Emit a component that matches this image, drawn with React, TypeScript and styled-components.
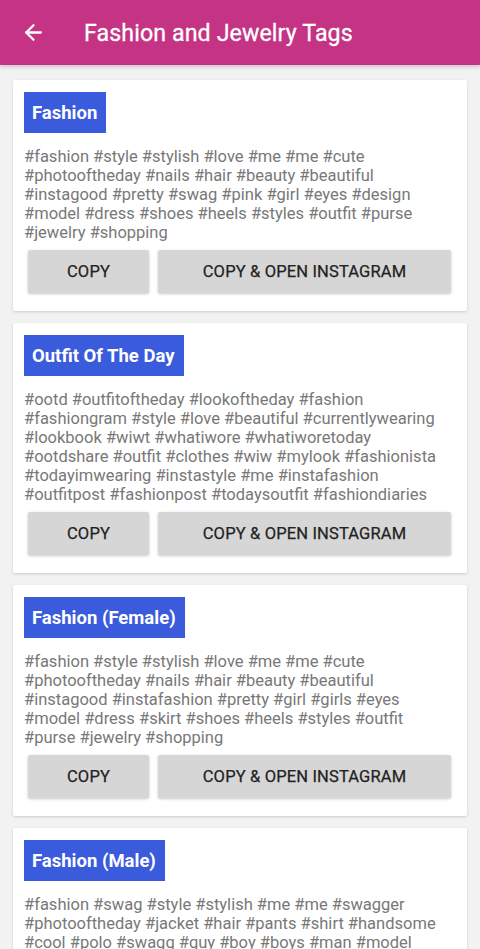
import styled, { createGlobalStyle } from 'styled-components';
import { ArrowLeft } from 'lucide-react';

const GlobalStyle = createGlobalStyle`
  html, body {
    margin: 0;
    padding: 0;
    background: #f2f2f2;
    font-family: Roboto, 'Noto Sans', Arial, sans-serif;
  }
  body {
    overflow: hidden;
  }
`;

interface TagGroup {
  title: string;
  lines: string[];
}

// lines kept as the app wraps them
const groups: TagGroup[] = [
  {
    title: 'Fashion',
    lines: [
      '#fashion #style #stylish #love #me #me #cute',
      '#photooftheday #nails #hair #beauty #beautiful',
      '#instagood #pretty #swag #pink #girl #eyes #design',
      '#model #dress #shoes #heels #styles #outfit #purse',
      '#jewelry #shopping',
    ],
  },
  {
    title: 'Outfit Of The Day',
    lines: [
      '#ootd #outfitoftheday #lookoftheday #fashion',
      '#fashiongram #style #love #beautiful #currentlywearing',
      '#lookbook #wiwt #whatiwore #whatiworetoday',
      '#ootdshare #outfit #clothes #wiw #mylook #fashionista',
      '#todayimwearing #instastyle #me #instafashion',
      '#outfitpost #fashionpost #todaysoutfit #fashiondiaries',
    ],
  },
  {
    title: 'Fashion (Female)',
    lines: [
      '#fashion #style #stylish #love #me #me #cute',
      '#photooftheday #nails #hair #beauty #beautiful',
      '#instagood #instafashion #pretty #girl #girls #eyes',
      '#model #dress #skirt #shoes #heels #styles #outfit',
      '#purse #jewelry #shopping',
    ],
  },
  {
    title: 'Fashion (Male)',
    lines: [
      '#fashion #swag #style #stylish #me #me #swagger',
      '#photooftheday #jacket #hair #pants #shirt #handsome',
      '#cool #polo #swagg #guy #boy #boys #man #model',
    ],
  },
];

function TagCard({ title, lines }: TagGroup) {
  return (
    <Card>
      <Chip>{title}</Chip>
      <Tags>
        {lines.map((l, i) => (
          <TagLine key={i}>{l}</TagLine>
        ))}
      </Tags>
      <ButtonRow>
        <ActionButton $grow={false}>COPY</ActionButton>
        <ActionButton $grow>COPY &amp; OPEN INSTAGRAM</ActionButton>
      </ButtonRow>
    </Card>
  );
}

export default function App() {
  return (
    <>
      <GlobalStyle />
      <Page>
        <AppBar>
          <BackButton aria-label="back">
            <ArrowLeft size={25} strokeWidth={2.2} color="#fff" />
          </BackButton>
          <Title>Fashion and Jewelry Tags</Title>
        </AppBar>
        <List>
          {groups.map((g) => (
            <TagCard key={g.title} {...g} />
          ))}
        </List>
      </Page>
    </>
  );
}

const Page = styled.div`
  width: 480px;
  height: 949px;
  overflow: hidden;
  background: #f2f2f2;
`;

const AppBar = styled.header`
  height: 65px;
  background: #c43384;
  display: flex;
  align-items: center;
  padding-left: 20px;
  box-shadow: 0 2px 4px rgba(0, 0, 0, 0.18);
`;

const BackButton = styled.div`
  width: 26px;
  height: 26px;
  display: flex;
  align-items: center;
  justify-content: center;
  margin-right: 38px;
`;

const Title = styled.h1`
  margin: 0;
  color: #fff;
  font-size: 23.2px;
  font-weight: 400;
  letter-spacing: 0.1px;
  -webkit-text-stroke: 0.3px #fff;
`;

const List = styled.main`
  display: flex;
  flex-direction: column;
  gap: 12px;
  padding: 15px 13px 0;
`;

const Card = styled.section`
  background: #fff;
  border-radius: 2px;
  box-shadow: 0 1px 3px rgba(0, 0, 0, 0.16);
  padding: 12px 11px 18px;
  display: flex;
  flex-direction: column;
  align-items: flex-start;
`;

const Chip = styled.div`
  background: #3b5bdd;
  color: #fff;
  font-size: 18.5px;
  font-weight: 700;
  height: 41px;
  display: flex;
  align-items: center;
  padding: 0 9px 0 8px;
`;

const Tags = styled.div`
  margin: 14px 0 0;
  color: #787878;
  font-size: 16.5px;
  line-height: 19px;
  width: 100%;
  white-space: nowrap;
`;

const TagLine = styled.div``;

const ButtonRow = styled.div`
  display: flex;
  gap: 9px;
  width: 100%;
  box-sizing: border-box;
  padding: 0 5px 0 4px;
  margin-top: 8px;
`;

const ActionButton = styled.button<{ $grow: boolean }>`
  flex: ${({ $grow }) => ($grow ? '1' : '0 0 121px')};
  height: 43px;
  border: none;
  border-radius: 2px;
  background: #d6d6d6;
  color: #222;
  font-family: Roboto, 'Noto Sans', Arial, sans-serif;
  font-size: 16.5px;
  font-weight: 400;
  letter-spacing: 0.15px;
  -webkit-text-stroke: 0.25px #222;
  box-shadow: 0 1px 3px rgba(0, 0, 0, 0.22);
`;
